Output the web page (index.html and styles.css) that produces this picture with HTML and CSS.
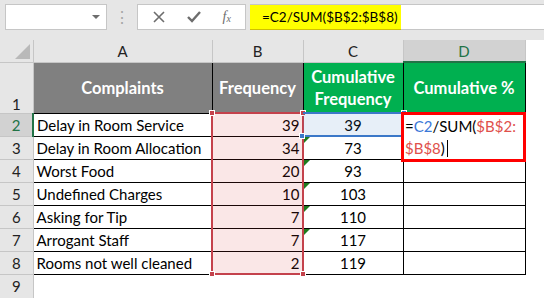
FILE: index.html
```html
<!DOCTYPE html>
<html>
<head>
    <meta charset="utf-8">
    <title>Cumulative %</title>
    <link rel="stylesheet" href="styles.css">
</head>
<body>
<div class="topbar">
    <div class="namebox"><span class="drop"></span></div>
    <div class="dots">⋮</div>
    <div class="btns">
        <svg width="14" height="14" viewBox="0 0 14 14"><path d="M2 2L12 12M12 2L2 12" stroke="#6d6d6d" stroke-width="1.6"/></svg>
        <svg width="16" height="14" viewBox="0 0 16 14"><path d="M2 7L6 11L14 2" stroke="#6d6d6d" stroke-width="2.4" fill="none"/></svg>
        <span class="fx">f<sub>x</sub></span>
    </div>
    <div class="formula"><span class="hl">=C2/SUM($B$2:$B$8)</span></div>
</div>
<div class="sheet">
    <table class="grid">
        <colgroup>
            <col class="c0"><col class="ca"><col class="cb"><col class="cc"><col class="cd"><col>
        </colgroup>
        <tr class="colhead">
            <th class="corner"><span class="tri"></span></th>
            <th>A</th><th>B</th><th>C</th><th class="sel">D</th><th class="blank"></th>
        </tr>
        <tr class="r1">
            <th class="rh bottom">1</th>
            <td class="gray">Complaints</td>
            <td class="gray">Frequency</td>
            <td class="green">Cumulative<br>Frequency</td>
            <td class="green">Cumulative %</td>
            <td class="blank"></td>
        </tr>
        <tr><th class="rh sel">2</th><td>Delay in Room Service</td><td class="num">39</td><td class="mid">39</td><td class="edit"></td><td class="blank"></td></tr>
        <tr><th class="rh">3</th><td>Delay in Room Allocation</td><td class="num">34</td><td class="mid flag">73</td><td></td><td class="blank"></td></tr>
        <tr><th class="rh">4</th><td>Worst Food</td><td class="num">20</td><td class="mid flag">93</td><td></td><td class="blank"></td></tr>
        <tr><th class="rh">5</th><td>Undefined Charges</td><td class="num">10</td><td class="mid flag">103</td><td></td><td class="blank"></td></tr>
        <tr><th class="rh">6</th><td>Asking for Tip</td><td class="num">7</td><td class="mid flag">110</td><td></td><td class="blank"></td></tr>
        <tr><th class="rh">7</th><td>Arrogant Staff</td><td class="num">7</td><td class="mid flag">117</td><td></td><td class="blank"></td></tr>
        <tr><th class="rh">8</th><td>Rooms not well cleaned</td><td class="num">2</td><td class="mid">119</td><td></td><td class="blank"></td></tr>
        <tr class="r9"><th class="rh">9</th><td class="blank"></td><td class="blank"></td><td class="blank"></td><td class="blank"></td><td class="blank"></td></tr>
    </table>
    <div class="refb"><i class="sq tl"></i><i class="sq tr"></i><i class="sq bl"></i><i class="sq br"></i></div>
    <div class="refc"><i class="sq tr"></i><i class="sq bl"></i></div>
    <div class="editbox">=<span class="blue">C2</span>/SUM(<span class="red">$B$2:</span><br><span class="red">$B$8</span>)<span class="caret"></span></div>
</div>
</body>
</html>
```
FILE: styles.css
```css
*{
    box-sizing: border-box;
}
body{
    margin: 0;
    height: 298px;
    overflow: hidden;
    background: #ffffff;
    font-family: Lato, "Liberation Sans", sans-serif;
    font-size: 15px;
    color: #000000;
}
.topbar{
    height: 40px;
    background: #e6e6e6;
    display: flex;
    align-items: flex-start;
    padding: 4px 0 0 5px;
}
.namebox{
    width: 102px;
    height: 26px;
    background: #ffffff;
    border: 1px solid #c6c6c6;
    position: relative;
}
.drop{
    position: absolute;
    right: 6px;
    top: 10px;
    border-left: 4px solid transparent;
    border-right: 4px solid transparent;
    border-top: 4px solid #6d6d6d;
}
.dots{
    width: 30px;
    text-align: center;
    color: #a6a6a6;
    font-size: 16px;
    line-height: 26px;
}
.btns{
    width: 109px;
    height: 26px;
    background: #ffffff;
    border: 1px solid #c6c6c6;
    display: flex;
    align-items: center;
    justify-content: space-around;
    padding: 0 4px;
}
.fx{
    font-family: "Liberation Serif", serif;
    font-style: italic;
    font-size: 14px;
    color: #6d6d6d;
}
.fx sub{
    font-size: 10px;
    vertical-align: -1px;
}
.formula{
    flex: 1;
    height: 26px;
    margin-left: 4px;
    background: #ffffff;
    border-top: 1px solid #c6c6c6;
    border-bottom: 1px solid #c6c6c6;
}
.hl{
    display: inline-block;
    height: 25px;
    width: 151px;
    background: #ffff00;
    padding-left: 12px;
    font-size: 13.5px;
    line-height: 24px;
    border-bottom: 1px solid #d0c000;
}
.sheet{
    position: relative;
}
.grid{
    border-collapse: collapse;
    table-layout: fixed;
    width: 544px;
}
.c0{ width: 33px; }
.ca{ width: 179px; }
.cb{ width: 91px; }
.cc{ width: 100px; }
.cd{ width: 122px; }
.grid th{
    font-weight: normal;
    background: #e6e6e6;
    color: #222222;
    padding: 0;
}
.colhead th{
    height: 22px;
    border-right: 1px solid #c6c6c6;
    border-bottom: 1px solid #c6c6c6;
}
.colhead th.sel{
    background: #d2d2d2;
    color: #217346;
    border-bottom: 2px solid #217346;
}
.colhead th.blank{
    background: #ffffff;
    border: none;
}
.corner{
    position: relative;
}
.tri{
    position: absolute;
    right: 3px;
    bottom: 3px;
    border-left: 15px solid transparent;
    border-bottom: 15px solid #b9b9b9;
}
.rh{
    border-bottom: 1px solid #c6c6c6;
    border-right: 1px solid #c6c6c6;
    text-align: center;
}
.rh.bottom{
    vertical-align: bottom;
}
.rh.sel{
    background: #d2d2d2;
    color: #217346;
    border-right: 2px solid #217346;
}
.grid td{
    height: 23px;
    border: 1px solid #000000;
    padding: 0 3px;
    white-space: nowrap;
    overflow: hidden;
    line-height: 20px;
}
.grid td.blank{
    border: none;
}
.r1 td{
    height: 51px;
    font-weight: bold;
    font-size: 16.5px;
    color: #ffffff;
    text-align: center;
    line-height: 22px;
}
.r1 .gray{
    background: #808080;
}
.r1 .green{
    background: #00b050;
}
.r9 th{
    height: 24px;
}
.num{
    text-align: right;
}
.mid{
    text-align: center;
}
.flag{
    position: relative;
}
.flag::before{
    content: "";
    position: absolute;
    left: 0;
    top: 0;
    border-top: 6px solid #1e7b1e;
    border-right: 6px solid transparent;
}
.refb{
    position: absolute;
    left: 211px;
    top: 72px;
    width: 93px;
    height: 163px;
    border: 2px solid #c4424c;
    background: rgba(210, 60, 60, 0.12);
}
.refc{
    position: absolute;
    left: 303px;
    top: 72px;
    width: 100px;
    height: 25px;
    border-top: 2px solid #3b78c8;
    border-bottom: 2px solid #3b78c8;
    background: rgba(60, 120, 200, 0.12);
}
.sq{
    position: absolute;
    width: 6px;
    height: 6px;
    background: #c4424c;
    border: 1px solid #ffffff;
}
.refc .sq{
    background: #3b78c8;
}
.sq.tl{ left: -4px; top: -4px; }
.sq.tr{ right: -4px; top: -4px; }
.sq.bl{ left: -4px; bottom: -4px; }
.sq.br{ right: -4px; bottom: -4px; }
.editbox{
    position: absolute;
    left: 401px;
    top: 72px;
    width: 125px;
    height: 50px;
    border: 3px solid #ff0000;
    background: #ffffff;
    padding: 0 0 0 1px;
    line-height: 22px;
}
.blue{
    color: #3b78d8;
}
.red{
    color: #e0504b;
}
.caret{
    display: inline-block;
    width: 1px;
    height: 17px;
    background: #000000;
    vertical-align: -3px;
    margin-left: 2px;
}
```
